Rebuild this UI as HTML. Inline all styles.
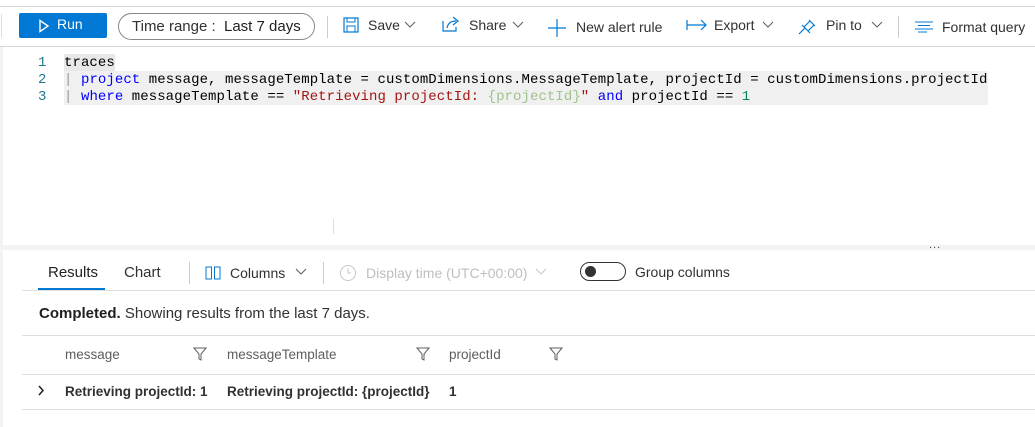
<!DOCTYPE html><html><head><style>
body{margin:0;width:1035px;height:427px;overflow:hidden;background:#fff;font-family:"Liberation Sans",sans-serif;position:relative;color:#323130}
.a{position:absolute;white-space:nowrap}
.mono{font-family:"Liberation Mono",monospace;font-size:14px;color:#000;letter-spacing:0.07px}
.t{font-size:14px}
.ln{color:#237893}
.kw{color:#0000ff}
.st{color:#a31515}
.gr{color:#9fc38a}
.num{color:#098658}
</style></head><body>
<div class="a" style="left:0;top:6px;width:1035px;height:1px;background:#d8d8d8"></div>
<div class="a" style="left:0;top:46px;width:1035px;height:1px;background:#d8d8d8"></div>
<div class="a" style="left:0;top:47px;width:3px;height:380px;background:#f3f3f3"></div>
<div class="a" style="left:0;top:245px;width:1035px;height:5px;background:#f3f3f3"></div>
<div class="a" style="left:1px;top:14px;width:1px;height:24px;background:#ddd"></div>
<div class="a" style="left:19px;top:13px;width:88px;height:25px;background:#0078d4;border-radius:2px"></div>
<svg class="a" style="left:38px;top:19px" width="12" height="14"><path d="M2 1.5 L10 7 L2 12.5Z" fill="none" stroke="#fff" stroke-width="1.4"/></svg>
<div class="a t" style="left:57px;top:16px;color:#fff">Run</div>
<div class="a" style="left:118px;top:13px;width:195px;height:25px;border:1px solid #8a8886;border-radius:14px"></div>
<div class="a" style="left:132px;top:18px;font-size:15px;color:#323130">Time range :&nbsp; <span style="color:#201f1e">Last 7 days</span></div>
<div class="a" style="left:327px;top:16px;width:1px;height:22px;background:#ccc"></div>
<svg class="a" style="left:343px;top:17px" width="16" height="16"><rect x="1" y="1" width="14" height="14" fill="none" stroke="#0078d4" stroke-width="1.2"/><rect x="4" y="1" width="8" height="4" fill="none" stroke="#0078d4"/><rect x="4" y="9" width="8" height="6" fill="none" stroke="#0078d4"/></svg>
<div class="a t" style="left:368px;top:17px">Save</div>
<svg class="a" style="left:404px;top:21px" width="12" height="8"><path d="M1 1 L6 6 L11 1" fill="none" stroke="#605e5c"/></svg>
<svg class="a" style="left:442px;top:16px" width="18" height="16"><path d="M1 5 V15 H14 V11 M5 12 C6 7 9 5 14 5 M11 1 L16 5 L11 9" fill="none" stroke="#0078d4" stroke-width="1.2"/></svg>
<div class="a t" style="left:469px;top:17px">Share</div>
<svg class="a" style="left:512px;top:21px" width="12" height="8"><path d="M1 1 L6 6 L11 1" fill="none" stroke="#605e5c"/></svg>
<svg class="a" style="left:548px;top:19px" width="18" height="18"><path d="M9 0V18M0 9H18" stroke="#0078d4" stroke-width="1.2"/></svg>
<div class="a t" style="left:576px;top:19px">New alert rule</div>
<svg class="a" style="left:686px;top:19px" width="22" height="12"><path d="M1 1V11M1 6H20M15 1L20 6L15 11" fill="none" stroke="#0078d4" stroke-width="1.2"/></svg>
<div class="a t" style="left:714px;top:17px">Export</div>
<svg class="a" style="left:762px;top:21px" width="12" height="8"><path d="M1 1 L6 6 L11 1" fill="none" stroke="#605e5c"/></svg>
<svg class="a" style="left:798px;top:17px" width="20" height="18"><path d="M1 17 L7 11 M4 8 L12 16 M6 10 L12 4 M10 14 L16 8 M11 3 L17 9" fill="none" stroke="#0078d4" stroke-width="1.2"/></svg>
<div class="a t" style="left:826px;top:17px">Pin to</div>
<svg class="a" style="left:871px;top:21px" width="12" height="8"><path d="M1 1 L6 6 L11 1" fill="none" stroke="#605e5c"/></svg>
<div class="a" style="left:898px;top:16px;width:1px;height:22px;background:#ccc"></div>
<svg class="a" style="left:914px;top:21px" width="20" height="12"><path d="M1 1H19M4 4.5H16M1 8H19M4 11H13" stroke="#0078d4" stroke-width="1"/></svg>
<div class="a t" style="left:942px;top:19px">Format query</div>
<div class="a" style="left:64px;top:54px;width:51px;height:17px;background:#e8e8e8"></div>
<div class="a" style="left:64px;top:71px;width:924px;height:34px;background:#f0f0f0"></div>
<div class="a mono ln" style="left:38px;top:55px;line-height:17px">1<br>2<br>3</div>
<div class="a mono" style="left:64px;top:55px;line-height:17px">traces<br><span style="color:#999">|</span> <span class="kw">project</span> message, messageTemplate = customDimensions.MessageTemplate, projectId = customDimensions.projectId<br><span style="color:#999">|</span> <span class="kw">where</span> messageTemplate == <span class="st">"Retrieving projectId: </span><span class="gr">{projectId}</span><span class="st">"</span> <span class="kw">and</span> projectId == <span class="num">1</span></div>
<div class="a" style="left:333px;top:219px;width:1px;height:15px;background:#ddd"></div>
<div class="a" style="left:929px;top:239px;font-size:11px;color:#444;letter-spacing:1px">...</div>
<div class="a" style="left:48px;top:264px;font-size:15px;color:#201f1e">Results</div>
<div class="a" style="left:38px;top:288px;width:67px;height:2px;background:#0078d4"></div>
<div class="a" style="left:124px;top:264px;font-size:15px">Chart</div>
<div class="a" style="left:189px;top:262px;width:1px;height:22px;background:#ccc"></div>
<svg class="a" style="left:205px;top:266px" width="16" height="14"><rect x="1" y="1" width="5.5" height="12" fill="none" stroke="#0078d4"/><rect x="9.5" y="1" width="5.5" height="12" fill="none" stroke="#0078d4"/></svg>
<div class="a t" style="left:230px;top:265px">Columns</div>
<svg class="a" style="left:295px;top:268px" width="12" height="8"><path d="M1 1 L6 6 L11 1" fill="none" stroke="#605e5c"/></svg>
<div class="a" style="left:323px;top:262px;width:1px;height:22px;background:#ccc"></div>
<svg class="a" style="left:339px;top:264px" width="18" height="18"><circle cx="9" cy="9" r="7.5" fill="none" stroke="#c8c6c4"/><path d="M9 4V9H12" fill="none" stroke="#c8c6c4"/></svg>
<div class="a t" style="left:366px;top:265px;color:#c0bebc">Display time (UTC+00:00)</div>
<svg class="a" style="left:535px;top:268px" width="12" height="8"><path d="M1 1 L6 6 L11 1" fill="none" stroke="#c8c6c4"/></svg>
<div class="a" style="left:580px;top:262px;width:46px;height:19px;border:1px solid #333;border-radius:10px;box-sizing:border-box"></div>
<div class="a" style="left:585px;top:266px;width:11px;height:11px;border-radius:6px;background:#333"></div>
<div class="a t" style="left:635px;top:264px">Group columns</div>
<div class="a" style="left:22px;top:290px;width:1013px;height:1px;background:#e1dfdd"></div>
<div class="a" style="left:39px;top:305px;font-size:15px"><b style="font-weight:600;color:#201f1e">Completed.</b> Showing results from the last 7 days.</div>
<div class="a" style="left:22px;top:335px;width:1013px;height:1px;background:#e1dfdd"></div>
<div class="a" style="left:65px;top:347px;font-size:13.5px;color:#605e5c">message</div>
<div class="a" style="left:227px;top:347px;font-size:13.5px;color:#605e5c">messageTemplate</div>
<div class="a" style="left:449px;top:347px;font-size:13.5px;color:#605e5c">projectId</div>
<svg class="a" style="left:193px;top:347px" width="14" height="14"><path d="M1 1H13L8 7V13L6 12V7Z" fill="none" stroke="#605e5c"/></svg>
<svg class="a" style="left:416px;top:347px" width="14" height="14"><path d="M1 1H13L8 7V13L6 12V7Z" fill="none" stroke="#605e5c"/></svg>
<svg class="a" style="left:549px;top:347px" width="14" height="14"><path d="M1 1H13L8 7V13L6 12V7Z" fill="none" stroke="#605e5c"/></svg>
<div class="a" style="left:22px;top:374px;width:1013px;height:1px;background:#e1dfdd"></div>
<svg class="a" style="left:37px;top:385px" width="8" height="12"><path d="M2 1L6 5.5L2 10" fill="none" stroke="#201f1e" stroke-width="1.5"/></svg>
<div class="a" style="left:65px;top:384px;font-size:13.5px;font-weight:600;color:#323130">Retrieving projectId: 1</div>
<div class="a" style="left:227px;top:384px;font-size:13.5px;font-weight:600;color:#323130">Retrieving projectId: {projectId}</div>
<div class="a" style="left:449px;top:384px;font-size:13.5px;font-weight:600;color:#323130">1</div>
<div class="a" style="left:22px;top:409px;width:1013px;height:1px;background:#e1dfdd"></div>
</body></html>
